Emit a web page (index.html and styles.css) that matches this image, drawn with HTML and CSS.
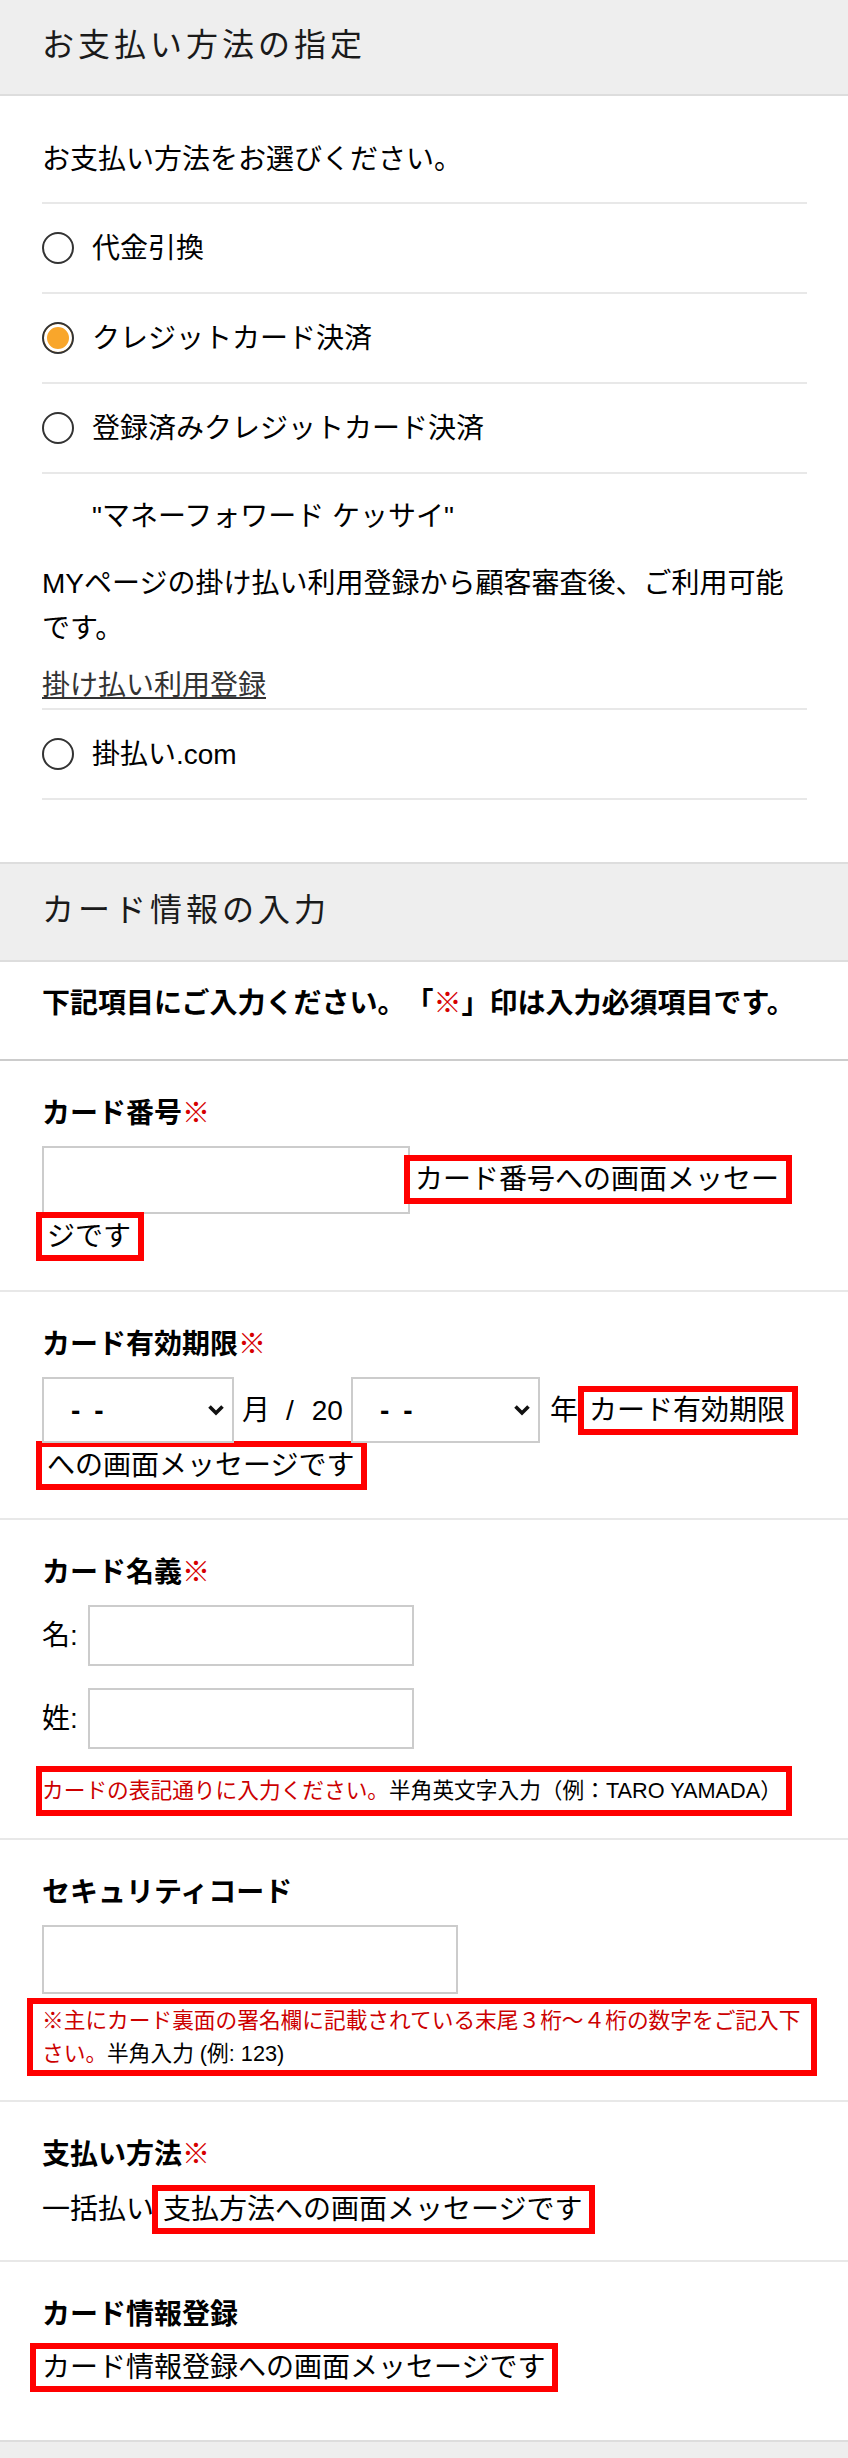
FILE: index.html
```html
<!DOCTYPE html>
<html lang="ja">
<head>
<meta charset="utf-8">
<title>お支払い方法の指定</title>
<link rel="stylesheet" href="styles.css">
</head>
<body>
<section class="pay">
  <h2 class="sec-head">お支払い方法の指定</h2>
  <div class="pay-body">
    <p class="pay-intro">お支払い方法をお選びください。</p>
    <label class="pay-row"><input class="radio" type="radio" name="payment"><span>代金引換</span></label>
    <label class="pay-row"><input class="radio" type="radio" name="payment" checked><span>クレジットカード決済</span></label>
    <label class="pay-row"><input class="radio" type="radio" name="payment"><span>登録済みクレジットカード決済</span></label>
    <div class="pay-info">
      <p class="pay-brand">"マネーフォワード ケッサイ"</p>
      <p class="pay-desc">MYページの掛け払い利用登録から顧客審査後、ご利用可能です。</p>
      <p class="pay-linkline"><a class="pay-link" href="#">掛け払い利用登録</a></p>
    </div>
    <label class="pay-row"><input class="radio" type="radio" name="payment"><span>掛払い.com</span></label>
  </div>
</section>
<section class="card">
  <h2 class="sec-head sec-head--boxed">カード情報の入力</h2>
  <p class="card-intro">下記項目にご入力ください。「<span class="req">※</span>」印は入力必須項目です。</p>

  <div class="field field--number">
    <p class="field-label">カード番号<span class="req">※</span></p>
    <div class="field-line"><input class="text-input text-input--number" type="text"><span class="msg">カード番号への画面メッセージです</span></div>
  </div>

  <div class="field field--expiry">
    <p class="field-label">カード有効期限<span class="req">※</span></p>
    <div class="field-line"><span class="sel-wrap"><select class="sel sel--month"><option>--</option></select><svg class="chev" width="18" height="12" viewBox="0 0 18 12"><path d="M2.5 2.5 L9 9 L15.5 2.5" fill="none" stroke="#111" stroke-width="3.6"/></svg></span><span class="unit-month">月</span><span class="slash">/</span><span class="unit-cent">20</span><span class="sel-wrap sel-wrap--year"><select class="sel sel--year"><option>--</option></select><svg class="chev" width="18" height="12" viewBox="0 0 18 12"><path d="M2.5 2.5 L9 9 L15.5 2.5" fill="none" stroke="#111" stroke-width="3.6"/></svg></span><span class="unit-year">年</span><span class="msg">カード有効期限への画面メッセージです</span></div>
  </div>

  <div class="field field--name">
    <p class="field-label">カード名義<span class="req">※</span></p>
    <div class="name-row"><span class="name-key">名:</span><input class="text-input name-input" type="text"></div>
    <div class="name-row"><span class="name-key">姓:</span><input class="text-input name-input" type="text"></div>
    <div class="note"><span class="note-box"><span class="note-red">カードの表記通りに入力ください。</span>半角英文字入力（例：TARO YAMADA）</span></div>
  </div>

  <div class="field field--code">
    <p class="field-label">セキュリティコード</p>
    <input class="text-input text-input--code" type="text">
    <div class="note-block"><span class="note-red">※主にカード裏面の署名欄に記載されている末尾３桁〜４桁の数字をご記入下さい。</span>半角入力 (例: 123)</div>
  </div>

  <div class="field field--method">
    <p class="field-label">支払い方法<span class="req">※</span></p>
    <div class="field-line">一括払い<span class="msg msg--after">支払方法への画面メッセージです</span></div>
  </div>

  <div class="field field--save">
    <p class="field-label">カード情報登録</p>
    <div class="field-line"><span class="msg msg--lead">カード情報登録への画面メッセージです</span></div>
  </div>
  <div class="sec-foot"></div>
</section>
</body>
</html>
```

FILE: styles.css
```css
* {
  box-sizing: border-box;
}

html,
body {
  margin: 0;
  padding: 0;
  background: #fff;
}

body {
  font-family: "Liberation Sans", "Noto Sans CJK JP", sans-serif;
  font-size: 28px;
  line-height: 45px;
  color: #000;
  text-spacing-trim: space-all;
}

p {
  margin: 0;
}

/* section headers */
.sec-head {
  margin: 0;
  height: 96px;
  padding: 23px 42px 0;
  background: #eeeeee;
  border-bottom: 2px solid #dddddd;
  font-size: 32px;
  font-weight: normal;
  letter-spacing: 4px;
  line-height: 45px;
  color: #1a1a1a;
}

.sec-head--boxed {
  height: 100px;
  padding-top: 24px;
  border-top: 2px solid #dddddd;
}

/* payment method list */
.pay-body {
  padding: 41px 41px 62px 42px;
}

.pay-intro {
  padding-bottom: 20px;
  border-bottom: 2px solid #e8e8e8;
}

.pay-row {
  display: flex;
  align-items: center;
  height: 90px;
  border-bottom: 2px solid #e8e8e8;
}

.radio {
  -webkit-appearance: none;
  appearance: none;
  flex: none;
  width: 32px;
  height: 32px;
  margin: 0 18px 0 0;
  border: 2px solid #333;
  border-radius: 50%;
  background: #fff;
}

.radio:checked {
  background: #f9a62b;
  box-shadow: inset 0 0 0 3px #fff;
}

.pay-info {
  padding-top: 20px;
  border-bottom: 2px solid #e8e8e8;
}

.pay-brand {
  padding-left: 50px;
  margin-bottom: 22px;
}

.pay-desc {
  margin-bottom: 12px;
}

.pay-link {
  color: #333;
  text-decoration: underline;
}

/* card info */
.card-intro {
  padding: 19px 44px 33px 42px;
  border-bottom: 2px solid #cccccc;
  font-weight: bold;
}

.req {
  color: #d60000;
}

.field {
  padding: 30px 44px 30px 42px;
  border-bottom: 2px solid #e8e8e8;
}

.field--number {
  padding-bottom: 31px;
}

.field--name {
  padding-bottom: 22px;
}

.field--code {
  padding-bottom: 24px;
}

.field--method {
  padding-bottom: 28px;
}

.field--save {
  padding-bottom: 50px;
  border-bottom: none;
}

.field-label {
  font-weight: bold;
  margin-bottom: 10px;
}

.field--save .field-label {
  margin-bottom: 8px;
}

.text-input {
  height: 68px;
  margin: 0;
  padding: 0 10px;
  border: 2px solid #cccccc;
  border-radius: 0;
  background: #fff;
  font: inherit;
  color: #000;
  outline: none;
  vertical-align: baseline;
}

.text-input--number {
  width: 368px;
}

.text-input--code {
  display: block;
  width: 416px;
  height: 69px;
}

/* red message boxes */
.msg {
  margin-left: -6px;
  padding: 3px 7px 3px 5px;
  border: 6px solid #ff0000;
  -webkit-box-decoration-break: clone;
  box-decoration-break: clone;
}

.msg--after {
  margin-left: -2px;
}

.msg--lead {
  margin-left: -12px;
  padding-left: 6px;
}

/* expiry */
.sel-wrap {
  position: relative;
  display: inline-block;
}

.sel-wrap--year {
  margin-left: 8px;
}

.sel {
  -webkit-appearance: none;
  appearance: none;
  height: 66px;
  margin: 0;
  padding: 0 0 0 27px;
  border: 2px solid #cccccc;
  border-radius: 0;
  background: #fff;
  font: inherit;
  font-weight: bold;
  color: #000;
  letter-spacing: 14px;
  vertical-align: baseline;
}

.sel--month {
  width: 192px;
}

.sel--year {
  width: 189px;
}

.chev {
  position: absolute;
  right: 9px;
  top: 50%;
  margin-top: -6px;
  pointer-events: none;
}

.unit-month {
  margin-left: 8px;
}

.slash {
  margin: 0 18px 0 16px;
}

.unit-year {
  margin: 0 6px 0 10px;
}

/* name */
.name-row {
  display: flex;
  align-items: center;
}

.name-row + .name-row {
  margin-top: 22px;
}

.name-input {
  width: 326px;
  height: 61px;
  margin-left: 10px;
}

.note {
  display: flex;
  margin-top: 17px;
}

.note-box {
  margin-left: -6px;
  padding: 0 4px 0 0;
  border: 6px solid #ff0000;
  font-size: 21.7px;
  line-height: 38px;
  white-space: nowrap;
}

.note-red {
  color: #cc0000;
}

.note-block {
  margin: 4px -13px 0 -15px;
  padding: 0 4px 0 9px;
  border: 6px solid #ff0000;
  font-size: 21.7px;
  line-height: 33px;
}

.sec-foot {
  height: 18px;
  background: #eeeeee;
  border-top: 2px solid #dddddd;
}
```
